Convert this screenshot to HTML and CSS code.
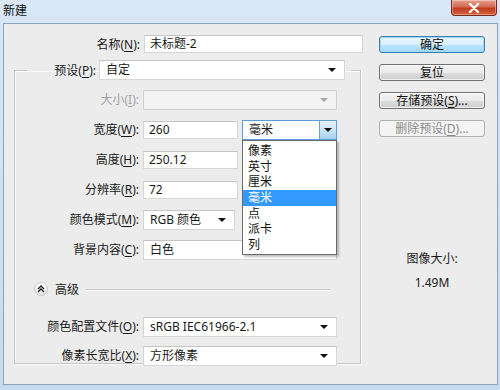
FILE: index.html
```html
<!DOCTYPE html>
<html lang="zh-CN">
  <head>
    <meta charset="UTF-8" />
    <title>新建</title>
    <link rel="stylesheet" href="styles.css">
  </head>
  <body>

    <div class="window">
      <div class="titlebar">
        <span class="title">新建</span>
        <span class="close-btn">
          <svg width="12" height="10" viewBox="0 0 12 10">
            <path d="M2 1 L10 9 M10 1 L2 9" stroke="#fff" stroke-width="2.4" stroke-linecap="round"/>
          </svg>
        </span>
      </div>

      <div class="client">
        <div class="form-col">
          <div class="name-row">
            <label class="name-label">名称(<u>N</u>):</label>
            <div class="text-field name-field">未标题-2</div>
          </div>

          <fieldset class="group">
            <legend class="preset">
              <div class="preset-inner">
                <label class="preset-label">预设(<u>P</u>):</label>
                <div class="select preset-select">自定<span class="arrow"></span></div>
              </div>
            </legend>

            <div class="rows">
              <div class="row">
                <label class="row-label disabled">大小(<u>I</u>):</label>
                <div class="select select-disabled wide"><span class="arrow arrow-grey"></span></div>
              </div>
              <div class="row">
                <label class="row-label">宽度(<u>W</u>):</label>
                <div class="text-field short">260</div>
                <div class="unit-select">
                  <span>毫米</span>
                  <span class="unit-btn"><span class="arrow"></span></span>
                  <ul class="unit-menu">
                    <li>像素</li>
                    <li>英寸</li>
                    <li>厘米</li>
                    <li class="selected">毫米</li>
                    <li>点</li>
                    <li>派卡</li>
                    <li>列</li>
                  </ul>
                </div>
              </div>
              <div class="row">
                <label class="row-label">高度(<u>H</u>):</label>
                <div class="text-field short">250.12</div>
              </div>
              <div class="row">
                <label class="row-label">分辨率(<u>R</u>):</label>
                <div class="text-field short">72</div>
              </div>
              <div class="row">
                <label class="row-label">颜色模式(<u>M</u>):</label>
                <div class="select mode-select">RGB 颜色<span class="arrow"></span></div>
              </div>
              <div class="row">
                <label class="row-label">背景内容(<u>C</u>):</label>
                <div class="select wide">白色<span class="arrow"></span></div>
              </div>
            </div>

            <div class="advanced">
              <span class="adv-icon">
                <svg width="8" height="8" viewBox="0 0 8 8">
                  <path d="M1 4 L4 1 L7 4 M1 7 L4 4 L7 7" fill="none" stroke="#222" stroke-width="1.3"/>
                </svg>
              </span>
              <span class="adv-text">高级</span>
              <span class="adv-line"></span>
            </div>

            <div class="row profile-row">
              <label class="row-label">颜色配置文件(<u>O</u>):</label>
              <div class="select wide">sRGB IEC61966-2.1<span class="arrow"></span></div>
            </div>
            <div class="row aspect-row">
              <label class="row-label">像素长宽比(<u>X</u>):</label>
              <div class="select wide">方形像素<span class="arrow"></span></div>
            </div>
          </fieldset>
        </div>

        <div class="button-col">
          <div class="btn btn-default">确定</div>
          <div class="btn">复位</div>
          <div class="btn">存储预设(<u>S</u>)...</div>
          <div class="btn btn-disabled">删除预设(<u>D</u>)...</div>

          <div class="size-info">
            <div>图像大小:</div>
            <div class="size-value">1.49M</div>
          </div>
        </div>
      </div>
    </div>

  </body>
</html>
```

FILE: styles.css
```css
* {
  box-sizing: border-box;
}

body {
  margin: 0;
  padding: 0;
  font-family: "Noto Sans", "Noto Sans CJK SC", sans-serif;
  font-size: 12px;
  color: #1a1a1a;
  background-color: #bcd3ec;
}

u {
  text-decoration: underline;
  text-underline-offset: 2px;
}

.window {
  width: 500px;
  height: 390px;
  display: flex;
  flex-direction: column;
  background: linear-gradient(to bottom, #d9e7f6 0%, #c6daf0 100%);
}

/* title bar */
.titlebar {
  height: 23px;
  display: flex;
  justify-content: space-between;
  align-items: flex-start;
}

.title {
  padding: 3px 0 0 3px;
  line-height: 16px;
  font-size: 12px;
  color: #111;
}

.close-btn {
  width: 46px;
  height: 16px;
  margin-right: 3px;
  display: flex;
  align-items: center;
  justify-content: center;
  border: 1px solid #7a2a1c;
  border-top: none;
  border-radius: 0 0 4px 4px;
  background: linear-gradient(to bottom, #e5a08c 0%, #d26c52 45%, #c03b1f 55%, #d3653d 100%);
  box-shadow: inset 0 0 0 1px rgba(255, 255, 255, 0.35);
}

/* client area */
.client {
  flex: 1;
  margin: 0 2px 5px 3px;
  border: 1px solid #8da3bd;
  background-color: #ececec;
  display: flex;
}

.form-col {
  width: 366px;
  padding: 11px 0 0 10px;
}

.name-row {
  display: flex;
  align-items: center;
  height: 18px;
  margin-bottom: 7px;
}

.name-label {
  width: 126px;
  text-align: right;
  margin-right: 4px;
}

.text-field {
  height: 18px;
  line-height: 16px;
  padding: 0 5px;
  background: #fff;
  border: 1px solid #d6d6d6;
  border-top-color: #c4c4c4;
}

.name-field {
  width: 219px;
}

/* group box */
.group {
  width: 347px;
  height: 304px;
  margin: 0;
  padding: 0;
  border: 1px solid #c6c6c6;
  box-shadow: inset 1px 1px 0 #fafafa, 1px 1px 0 #fafafa;
  min-width: 0;
}

.preset {
  padding: 0 6px 0 0;
  margin-left: 12px;
}

.preset-inner {
  display: flex;
  align-items: center;
}

.preset-label {
  width: 69px;
  text-align: right;
  margin-right: 3px;
}

.select {
  position: relative;
  height: 20px;
  line-height: 18px;
  padding: 0 6px;
  background: #fff;
  border: 1px solid #d6d6d6;
  border-top-color: #c4c4c4;
}

.preset-select {
  width: 246px;
}

.arrow {
  position: absolute;
  right: 8px;
  top: 7px;
  width: 0;
  height: 0;
  border-left: 4px solid transparent;
  border-right: 4px solid transparent;
  border-top: 4px solid #111;
}

.arrow-grey {
  border-top-color: #a8a8a8;
}

.rows {
  display: flex;
  flex-direction: column;
  gap: 10px;
  padding-top: 10px;
}

.row {
  display: flex;
  align-items: flex-start;
  height: 20px;
}

.row-label {
  width: 124px;
  text-align: right;
  margin-right: 4px;
  line-height: 20px;
}

.row-label.disabled {
  color: #a3a3a3;
}

.wide {
  width: 194px;
}

.select-disabled {
  background: #f3f3f3;
  border-color: #cfcfcf;
}

.short {
  width: 95px;
  margin-top: 1px;
}

.mode-select {
  width: 92px;
}

/* unit drop-down, opened */
.unit-select {
  position: relative;
  width: 95px;
  height: 20px;
  margin-left: 4px;
  line-height: 18px;
  padding: 0 6px;
  background: #fff;
  border: 1px solid #5c9fd8;
}

.unit-btn {
  position: absolute;
  right: 0;
  top: 0;
  width: 17px;
  height: 18px;
  border-left: 1px solid #6e9fcb;
  background: linear-gradient(to bottom, #e8f3fc 0%, #c9e3f7 50%, #a9d1f1 100%);
}

.unit-btn .arrow {
  right: 4px;
  top: 7px;
}

.unit-menu {
  position: absolute;
  left: -1px;
  top: 19px;
  width: 95px;
  margin: 0;
  padding: 2px 0 1px 0;
  list-style: none;
  background: #fff;
  border: 1px solid #6b6b6b;
  box-shadow: 2px 2px 2px rgba(0, 0, 0, 0.25);
  z-index: 5;
}

.unit-menu li {
  height: 15.7px;
  line-height: 15.7px;
  padding-left: 5px;
  color: #111;
}

.unit-menu .selected {
  background-color: #3399ff;
  color: #fff;
}

/* advanced */
.advanced {
  display: flex;
  align-items: center;
  height: 20px;
  margin-top: 19px;
  padding-left: 19px;
}

.adv-icon {
  width: 14px;
  height: 14px;
  border-radius: 50%;
  border: 1px solid #c9c9c9;
  background: linear-gradient(to bottom, #ffffff 0%, #e4e4e4 100%);
  display: flex;
  align-items: center;
  justify-content: center;
}

.adv-text {
  margin-left: 7px;
}

.adv-line {
  flex: 0 0 244px;
  height: 1px;
  margin-left: 7px;
  background-color: #c9c9c9;
  box-shadow: 0 1px 0 #fafafa;
}

.profile-row {
  margin-top: 18px;
}

.aspect-row {
  margin-top: 9px;
}

/* buttons */
.button-col {
  flex: 1;
  padding: 12px 0 0 9px;
  display: flex;
  flex-direction: column;
  align-items: flex-start;
}

.btn {
  width: 106px;
  height: 17px;
  margin-bottom: 11px;
  line-height: 15px;
  text-align: center;
  border: 1px solid #707070;
  border-radius: 3px;
  background: linear-gradient(to bottom, #f2f2f2 0%, #ebebeb 50%, #dddddd 51%, #cfcfcf 100%);
  box-shadow: inset 0 0 0 1px rgba(255, 255, 255, 0.7);
  color: #111;
}

.btn-default {
  border-color: #3c7fb1;
  background: linear-gradient(to bottom, #eaf6fd 0%, #d9f0fc 50%, #bee6fd 51%, #a7d9f5 100%);
  box-shadow: inset 0 0 0 1px #9fd7f5;
}

.btn-disabled {
  border-color: #adb2b5;
  background: #f4f4f4;
  box-shadow: none;
  color: #8a8a8a;
}

.size-info {
  width: 106px;
  margin-top: 103px;
  text-align: center;
  line-height: 16px;
}

.size-value {
  margin-top: 8px;
}
```
